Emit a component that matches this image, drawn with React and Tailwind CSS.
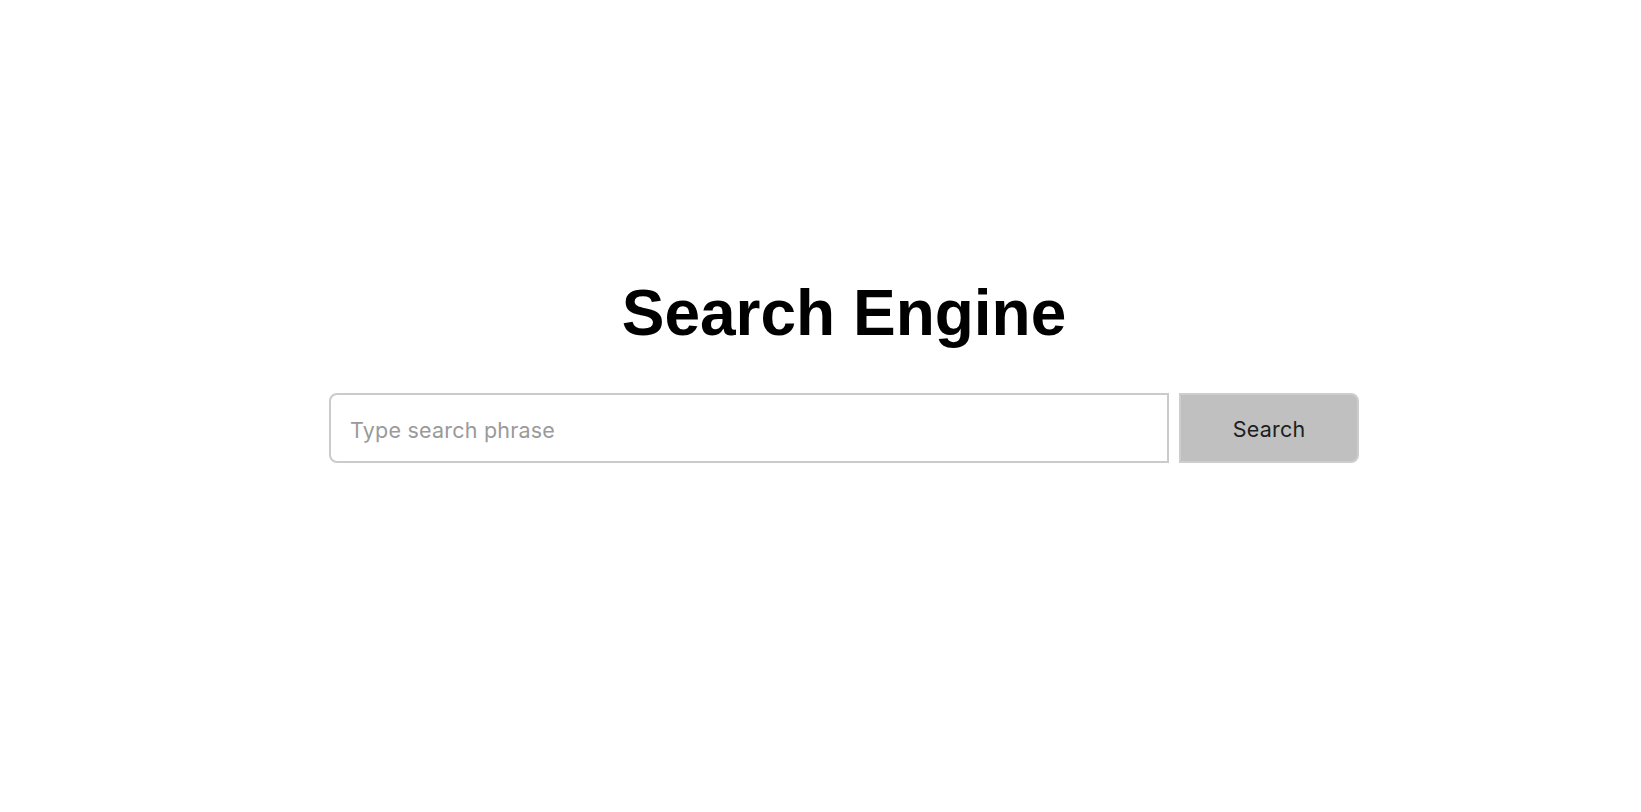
export default function App() {
  return (
    <div className="min-h-screen bg-white pt-[276px] pl-[47px]">
      <div className="flex flex-col items-center">
        <h1 className="text-[64px] leading-[74px] font-bold text-black font-['Liberation_Sans',Arial,sans-serif]">
          Search Engine
        </h1>
        <form className="mt-[43px] flex gap-[10px] font-['Inter',sans-serif]" onSubmit={(e) => e.preventDefault()}>
          <input
            type="text"
            placeholder="Type search phrase"
            className="h-[70px] w-[840px] rounded-l-[8px] border-2 border-[#cbcbcb] bg-white px-[19px] pt-[3px] text-[21.5px] tracking-[0.01em] text-[#222] outline-none placeholder:text-[#9a9a9a]"
          />
          <button
            type="submit"
            className="h-[70px] w-[180px] rounded-r-[8px] border-2 border-[#cdcdcd] bg-[#c0c0c0] pt-[3px] text-[21.5px] tracking-[0.01em] text-[#1e1e1e]"
          >
            Search
          </button>
        </form>
      </div>
    </div>
  );
}
